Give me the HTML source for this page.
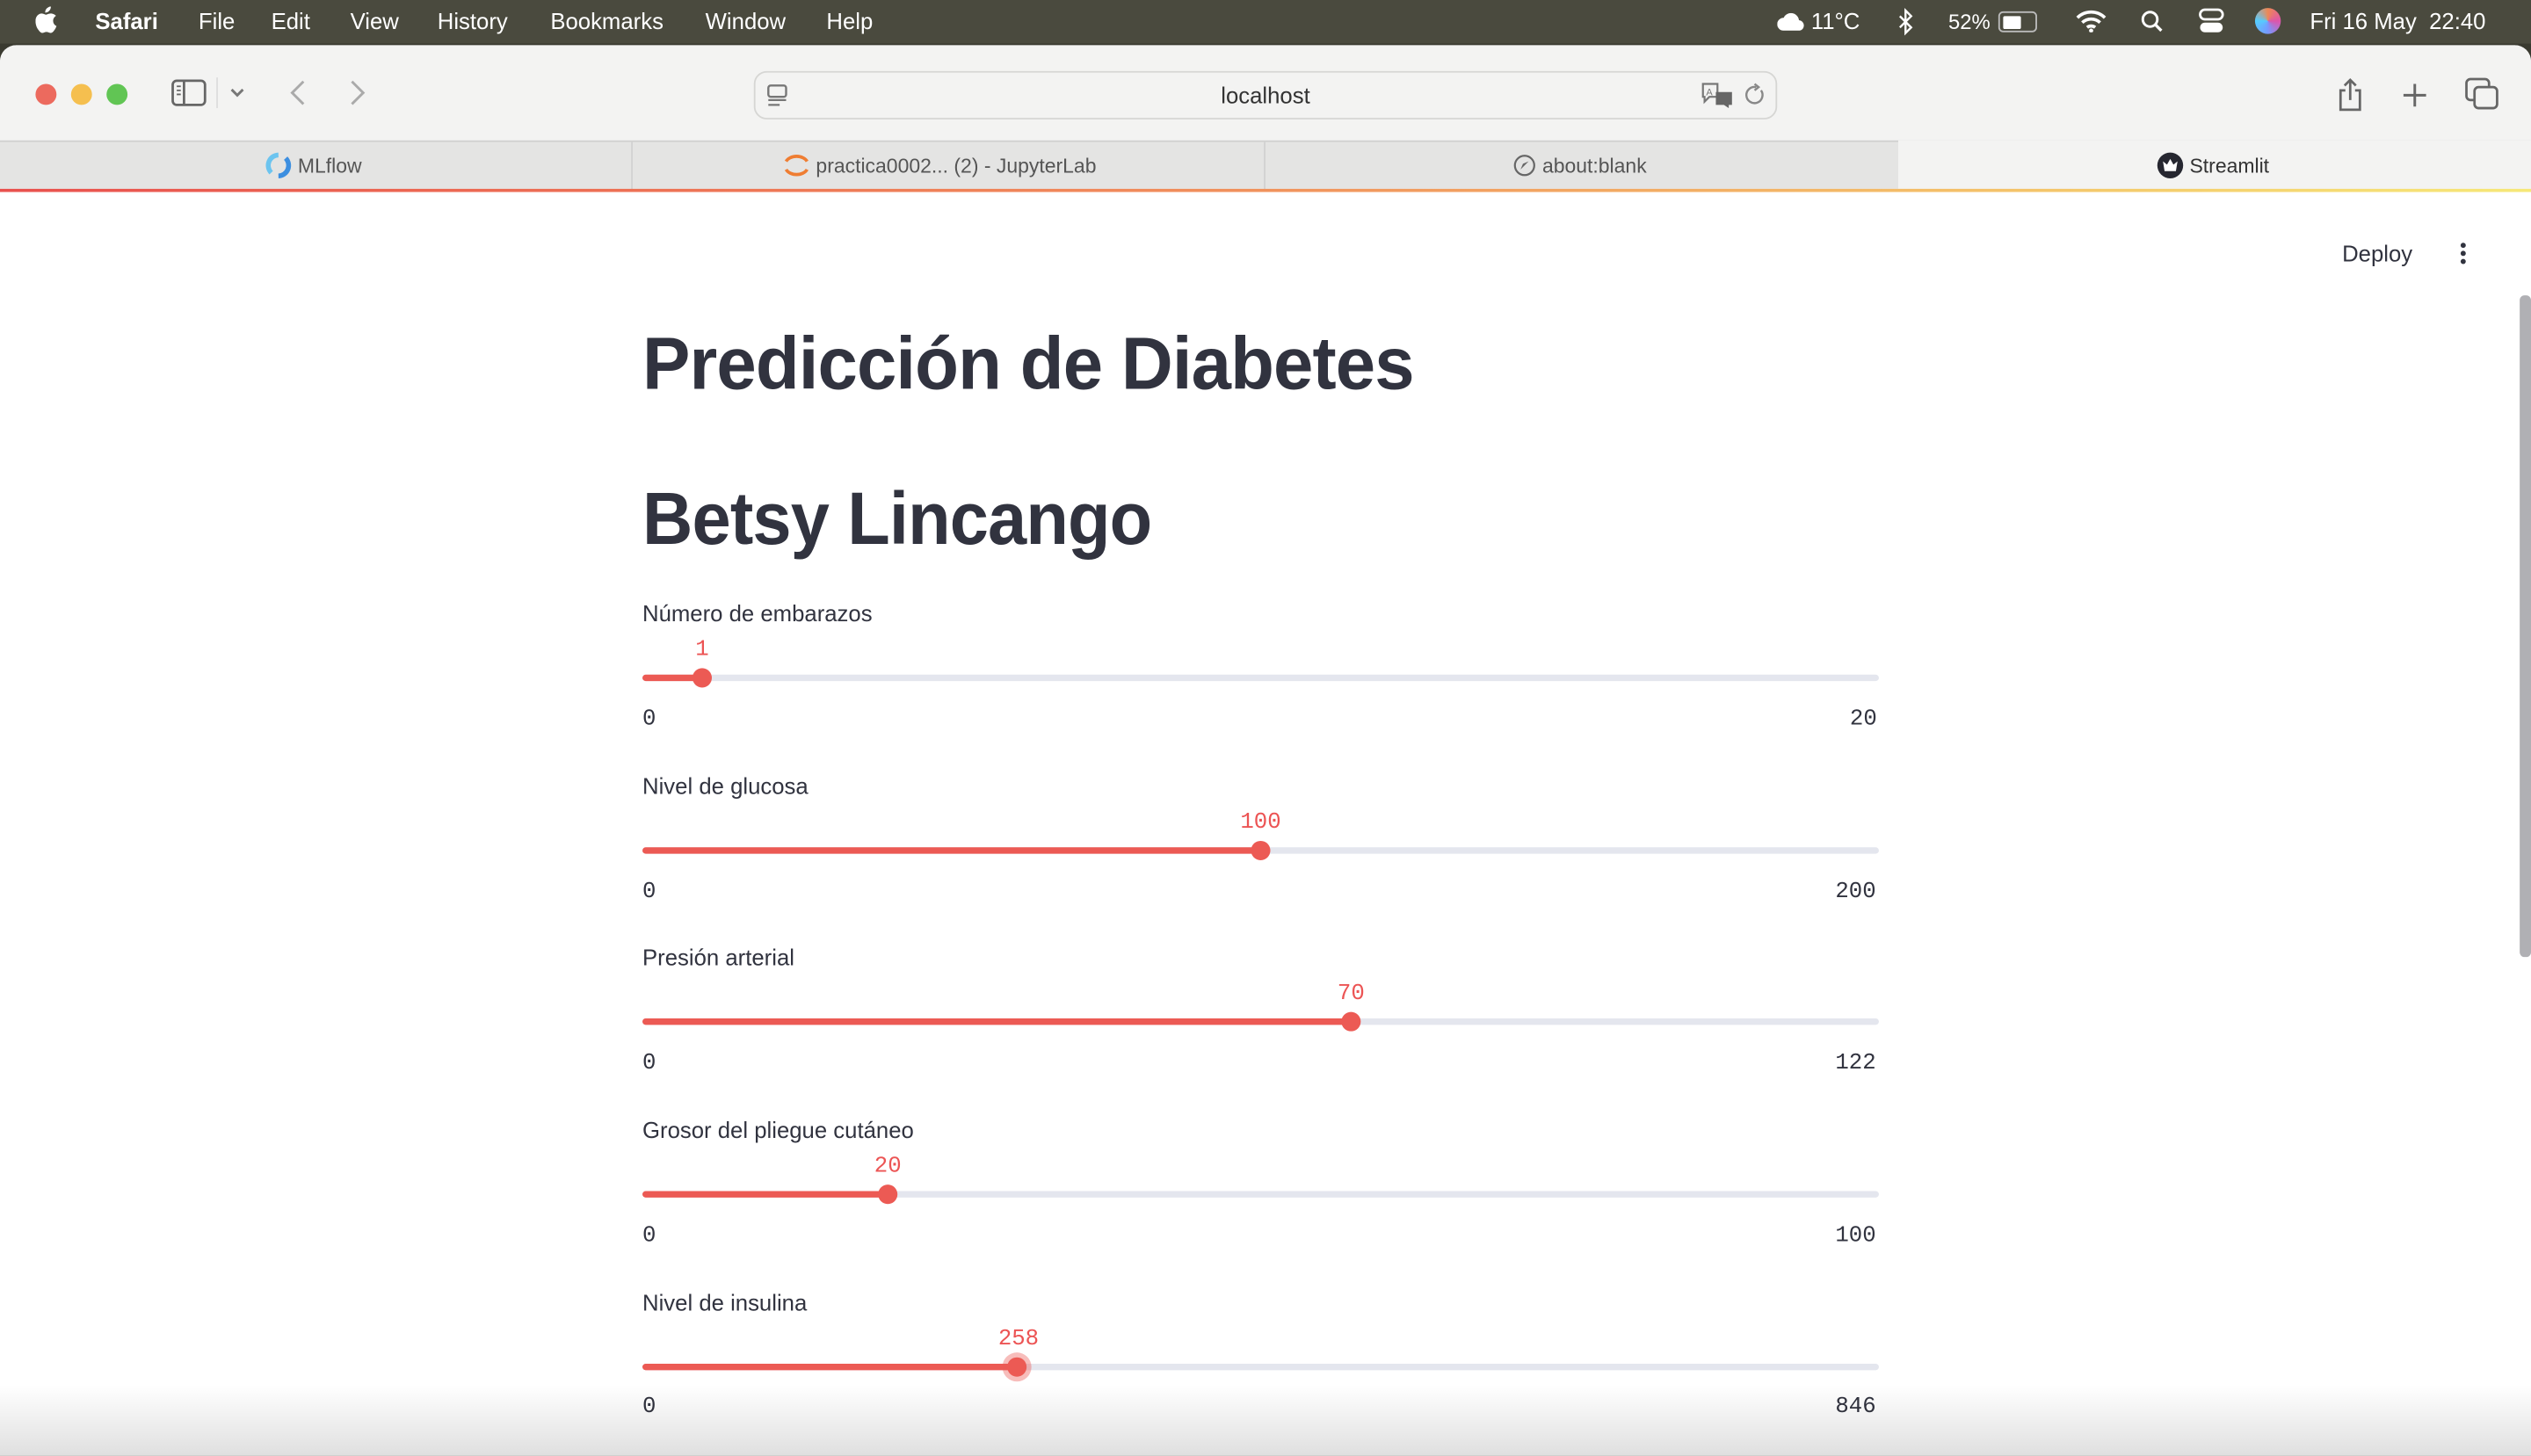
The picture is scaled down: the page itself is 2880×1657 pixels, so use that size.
<!DOCTYPE html>
<html><head><meta charset="utf-8">
<style>
html,body{margin:0;padding:0;width:2880px;height:1656px;overflow:hidden;background:#2a2a22;}
#w{position:absolute;left:0;top:0;width:1568px;height:902px;transform:scale(1.836735);transform-origin:0 0;font-family:"Liberation Sans",sans-serif;overflow:hidden;background:#3a3a30;}
.mb{position:absolute;left:0;top:0;width:1568px;height:27px;background:#4a4a3e;color:#fff;font-size:14px;}
.mb span{position:absolute;top:5px;}
.win{position:absolute;left:0;top:28px;width:1568px;height:880px;background:#fff;border-radius:10px 10px 0 0;overflow:hidden;}
.tb{position:absolute;left:0;top:0;width:1568px;height:59px;background:#f3f3f2;}
.dot{position:absolute;top:24px;width:13px;height:13px;border-radius:50%;}
.url{position:absolute;left:467px;top:16px;width:632px;height:28px;border:1px solid #d6d6d4;border-radius:8px;background:#f3f3f2;}
.tabs{position:absolute;left:0;top:59px;width:1568px;height:30px;background:#e4e4e3;border-top:1px solid #d0d0d0;box-sizing:border-box;}
.tab{position:absolute;top:0;height:30px;font-size:12.5px;color:#555;line-height:30px;}
.grad{position:absolute;left:0;top:89px;width:1568px;height:2px;background:linear-gradient(90deg,#e9514e,#f08a5a 45%,#f4c46a 80%,#f6e878);}
.c{position:absolute;left:0;top:91px;width:1568px;height:800px;background:#fff;color:#31333f;}
h1{position:absolute;left:398px;margin:0;font-size:46px;font-weight:bold;white-space:nowrap;transform-origin:0 0;letter-spacing:-0.5px;}
.lab{position:absolute;left:398px;font-size:14px;color:#31333f;}
.val{position:absolute;font-family:"Liberation Mono",monospace;font-size:14px;color:#ec5454;transform:translateX(-50%);}
.trk{position:absolute;left:398px;width:766px;height:4px;background:#e4e6ee;border-radius:2px;}
.fill{position:absolute;left:0;top:0;height:4px;background:#ec5a54;border-radius:2px;}
.th{position:absolute;width:12px;height:12px;border-radius:50%;background:#ec5a54;top:-4px;margin-left:-6px;}
.mn{position:absolute;font-family:"Liberation Mono",monospace;font-size:14px;color:#31333f;}
</style></head><body><div id="w">
<div class="mb">
<svg style="position:absolute;left:22px;top:4px" width="14" height="17" viewBox="0 0 14 17"><path d="M9.5 0c.1 1-.3 2-1 2.7-.6.7-1.6 1.2-2.5 1.1-.1-1 .4-2 1-2.6C7.7.5 8.7 0 9.5 0zM12.7 5.8c-.1.1-1.8 1-1.8 3.1 0 2.4 2.1 3.2 2.1 3.2s-.3 1.1-1.1 2.300c-.7 1-1.4 2-2.5 2s-1.4-.6-2.6-.6-1.6.6-2.6.6-1.8-1-2.5-2C.6 13 0 10.9 0 9c0-3 2-4.6 3.9-4.6 1 0 1.9.7 2.6.7.6 0 1.6-.7 2.8-.7.4 0 2.1 0 3.4 1.4z" fill="#fff"/></svg>
<span style="left:59px;font-weight:bold">Safari</span><span style="left:123px">File</span><span style="left:168px">Edit</span><span style="left:217px">View</span><span style="left:271px">History</span><span style="left:341px">Bookmarks</span><span style="left:437px">Window</span><span style="left:512px">Help</span>
<svg style="position:absolute;left:1101px;top:8px" width="18" height="11"><path d="M4 11a4 4 0 0 1 0-8 5 5 0 0 1 9.5 1.5A3.3 3.3 0 0 1 14 11z" fill="#fff"/></svg>
<span style="left:1122px">11°C</span>
<svg style="position:absolute;left:1176px;top:5px" width="10" height="17"><path d="M1 5l7 7-3.5 3.5V1.5L8 5 1 12" stroke="#fff" stroke-width="1.3" fill="none"/></svg>
<span style="left:1207px;font-size:13px;top:6px">52%</span>
<div style="position:absolute;left:1238px;top:7px;width:22px;height:11px;border:1px solid #bbb;border-radius:3px"><div style="margin:1.5px;width:11px;height:8px;background:#fff;border-radius:1px"></div></div>
<svg style="position:absolute;left:1286px;top:6px" width="19" height="14"><path d="M1 5a12 12 0 0 1 17 0M4 8a8 8 0 0 1 11 0M7 11a4 4 0 0 1 5 0" stroke="#fff" stroke-width="2" fill="none"/><circle cx="9.5" cy="13" r="1.3" fill="#fff"/></svg>
<svg style="position:absolute;left:1326px;top:6px" width="14" height="14"><circle cx="6" cy="6" r="4.5" stroke="#fff" stroke-width="1.6" fill="none"/><path d="M9.5 9.5L13 13" stroke="#fff" stroke-width="1.8"/></svg>
<svg style="position:absolute;left:1362px;top:5px" width="16" height="16"><rect x="1" y="1" width="14" height="6" rx="3" stroke="#fff" fill="none" stroke-width="1.5"/><rect x="1" y="9" width="14" height="6" rx="3" fill="#fff"/></svg>
<div style="position:absolute;left:1397px;top:5px;width:16px;height:16px;border-radius:50%;background:conic-gradient(#e85,#d5a,#79f,#5cf,#e85)"></div>
<span style="left:1431px">Fri 16 May&nbsp; 22:40</span>
</div>
<div class="win">
<div class="tb">
<div class="dot" style="left:21.5px;background:#ec6a5e"></div><div class="dot" style="left:43.5px;background:#f5bf4f"></div><div class="dot" style="left:65.5px;background:#61c554"></div>
<svg style="position:absolute;left:106px;top:21px" width="22" height="17"><rect x="1" y="1" width="20" height="15" rx="2.5" stroke="#666" stroke-width="1.5" fill="none"/><path d="M8 1v15" stroke="#666" stroke-width="1.5"/><path d="M3.5 4.5h2.5M3.5 7h2.5M3.5 9.5h2.5" stroke="#666" stroke-width="1"/></svg>
<div style="position:absolute;left:134px;top:20px;width:1px;height:19px;background:#ddd"></div>
<svg style="position:absolute;left:142px;top:26px" width="10" height="7"><path d="M1.5 1.5l3.5 3.5 3.5-3.5" stroke="#777" stroke-width="1.6" fill="none"/></svg>
<svg style="position:absolute;left:178px;top:21px" width="12" height="17"><path d="M10 1.5L3 8.5l7 7" stroke="#aaa" stroke-width="1.6" fill="none"/></svg>
<svg style="position:absolute;left:216px;top:21px" width="12" height="17"><path d="M2 1.5l7 7-7 7" stroke="#aaa" stroke-width="1.6" fill="none"/></svg>
<div class="url">
<svg style="position:absolute;left:7px;top:7px" width="14" height="15"><rect x="1" y="1" width="11" height="7" rx="1.5" stroke="#777" stroke-width="1.3" fill="none"/><path d="M1 10h11M1 13h7" stroke="#777" stroke-width="1.2"/></svg>
<div style="position:absolute;left:0;right:0;top:6px;text-align:center;font-size:14px;color:#333">localhost</div>
<svg style="position:absolute;left:586px;top:6px" width="22" height="16"><path d="M1 1h9v8H5l-3 3V9H1z" stroke="#777" stroke-width="1.2" fill="none"/><path d="M9 6h10v8h-2v2l-3-2H9z" fill="#666"/><text x="3" y="8" font-size="6" fill="#777" font-family="Liberation Sans">A</text></svg>
<svg style="position:absolute;left:612px;top:6px" width="14" height="16"><path d="M11 5a5 5 0 1 1-3-2" stroke="#888" stroke-width="1.3" fill="none"/><path d="M7 1l2.5 2L7 5" stroke="#888" stroke-width="1.3" fill="none"/></svg>
</div>
<svg style="position:absolute;left:1447px;top:20px" width="18" height="22"><path d="M6 8H3v12h12V8h-3M9 14V2M5.5 5L9 1.5 12.5 5" stroke="#666" stroke-width="1.5" fill="none"/></svg>
<svg style="position:absolute;left:1488px;top:23px" width="16" height="16"><path d="M8 1v14M1 8h14" stroke="#666" stroke-width="1.6"/></svg>
<svg style="position:absolute;left:1527px;top:20px" width="22" height="20"><rect x="1" y="1" width="14" height="13" rx="2.5" stroke="#666" stroke-width="1.5" fill="#f3f3f2"/><rect x="6" y="6" width="14" height="13" rx="2.5" stroke="#666" stroke-width="1.5" fill="#f3f3f2"/></svg>
</div>
<div class="tabs">
<div style="position:absolute;left:391px;top:0;width:1px;height:30px;background:#d2d2d2"></div>
<div style="position:absolute;left:783px;top:0;width:1px;height:30px;background:#d2d2d2"></div>
<div style="position:absolute;left:1176px;top:-1px;width:392px;height:31px;background:#f3f3f2"></div>
<div class="tab" style="left:164px"><svg style="vertical-align:-4px" width="17" height="17"><path d="M8.5 2a6.5 6.5 0 0 0-4.5 11" stroke="#6cc4ef" stroke-width="3" fill="none"/><path d="M8.5 15a6.5 6.5 0 0 0 4.5-11" stroke="#3d8fe0" stroke-width="3" fill="none"/></svg> MLflow</div>
<div class="tab" style="left:485px"><svg style="vertical-align:-4px" width="17" height="17"><path d="M2 6a7 5 0 0 1 13 0M2 11a7 5 0 0 0 13 0" stroke="#ef7d32" stroke-width="2" fill="none"/></svg> practica0002... (2) - JupyterLab</div>
<div class="tab" style="left:937px"><svg style="vertical-align:-3px" width="15" height="15"><circle cx="7.5" cy="7.5" r="6" stroke="#666" stroke-width="1.2" fill="none"/><path d="M10 5L6.5 8.5 5 10l1.5-3.5z" fill="#666"/></svg> about:blank</div>
<div class="tab" style="left:1336px;color:#333"><svg style="vertical-align:-4px" width="17" height="17"><circle cx="8.5" cy="8.5" r="8" fill="#262730"/><path d="M4 6l2.5 2L8.5 4.5 10.5 8 13 6l-1 6H5z" fill="#fff"/></svg> Streamlit</div>
</div>
<div class="grad"></div>
<div class="c">
<div style="position:absolute;left:1451px;top:30px;font-size:14px">Deploy</div>
<svg style="position:absolute;left:1522px;top:30px" width="8" height="16"><circle cx="4" cy="3" r="1.6" fill="#31333f"/><circle cx="4" cy="8" r="1.6" fill="#31333f"/><circle cx="4" cy="13" r="1.6" fill="#31333f"/></svg>
<div style="position:absolute;left:1561px;top:64px;width:7px;height:410px;background:#b0b0b4;border-radius:3px"></div>
<h1 style="top:79px;transform:scaleX(0.965)">Predicción de Diabetes</h1>
<h1 style="top:175px;transform:scaleX(0.94)">Betsy Lincango</h1>

<div class="lab" style="top:253px">Número de embarazos</div>
<div class="val" style="left:435px;top:276px">1</div>
<div class="trk" style="top:299px"><div class="fill" style="width:37px"></div><div class="th" style="left:37px"></div></div>
<div class="mn" style="left:398px;top:319px">0</div><div class="mn" style="left:1146px;top:319px">20</div>

<div class="lab" style="top:360px">Nivel de glucosa</div>
<div class="val" style="left:781px;top:383px">100</div>
<div class="trk" style="top:406px"><div class="fill" style="width:383px"></div><div class="th" style="left:383px"></div></div>
<div class="mn" style="left:398px;top:426px">0</div><div class="mn" style="left:1137px;top:426px">200</div>

<div class="lab" style="top:466px">Presión arterial</div>
<div class="val" style="left:837px;top:489px">70</div>
<div class="trk" style="top:512px"><div class="fill" style="width:439px"></div><div class="th" style="left:439px"></div></div>
<div class="mn" style="left:398px;top:532px">0</div><div class="mn" style="left:1137px;top:532px">122</div>

<div class="lab" style="top:573px">Grosor del pliegue cutáneo</div>
<div class="val" style="left:550px;top:596px">20</div>
<div class="trk" style="top:619px"><div class="fill" style="width:152px"></div><div class="th" style="left:152px"></div></div>
<div class="mn" style="left:398px;top:639px">0</div><div class="mn" style="left:1137px;top:639px">100</div>

<div class="lab" style="top:680px">Nivel de insulina</div>
<div class="val" style="left:631px;top:703px">258</div>
<div class="trk" style="top:726px"><div class="fill" style="width:232px"></div><div class="th" style="left:232px;box-shadow:0 0 0 3px rgba(236,90,84,0.4)"></div></div>
<div class="mn" style="left:398px;top:745px">0</div><div class="mn" style="left:1137px;top:745px">846</div>
</div>
<div style="position:absolute;left:0;top:830px;width:1568px;height:50px;background:linear-gradient(rgba(0,0,0,0),rgba(0,0,0,0.14))"></div>
</div>
</div></body></html>
